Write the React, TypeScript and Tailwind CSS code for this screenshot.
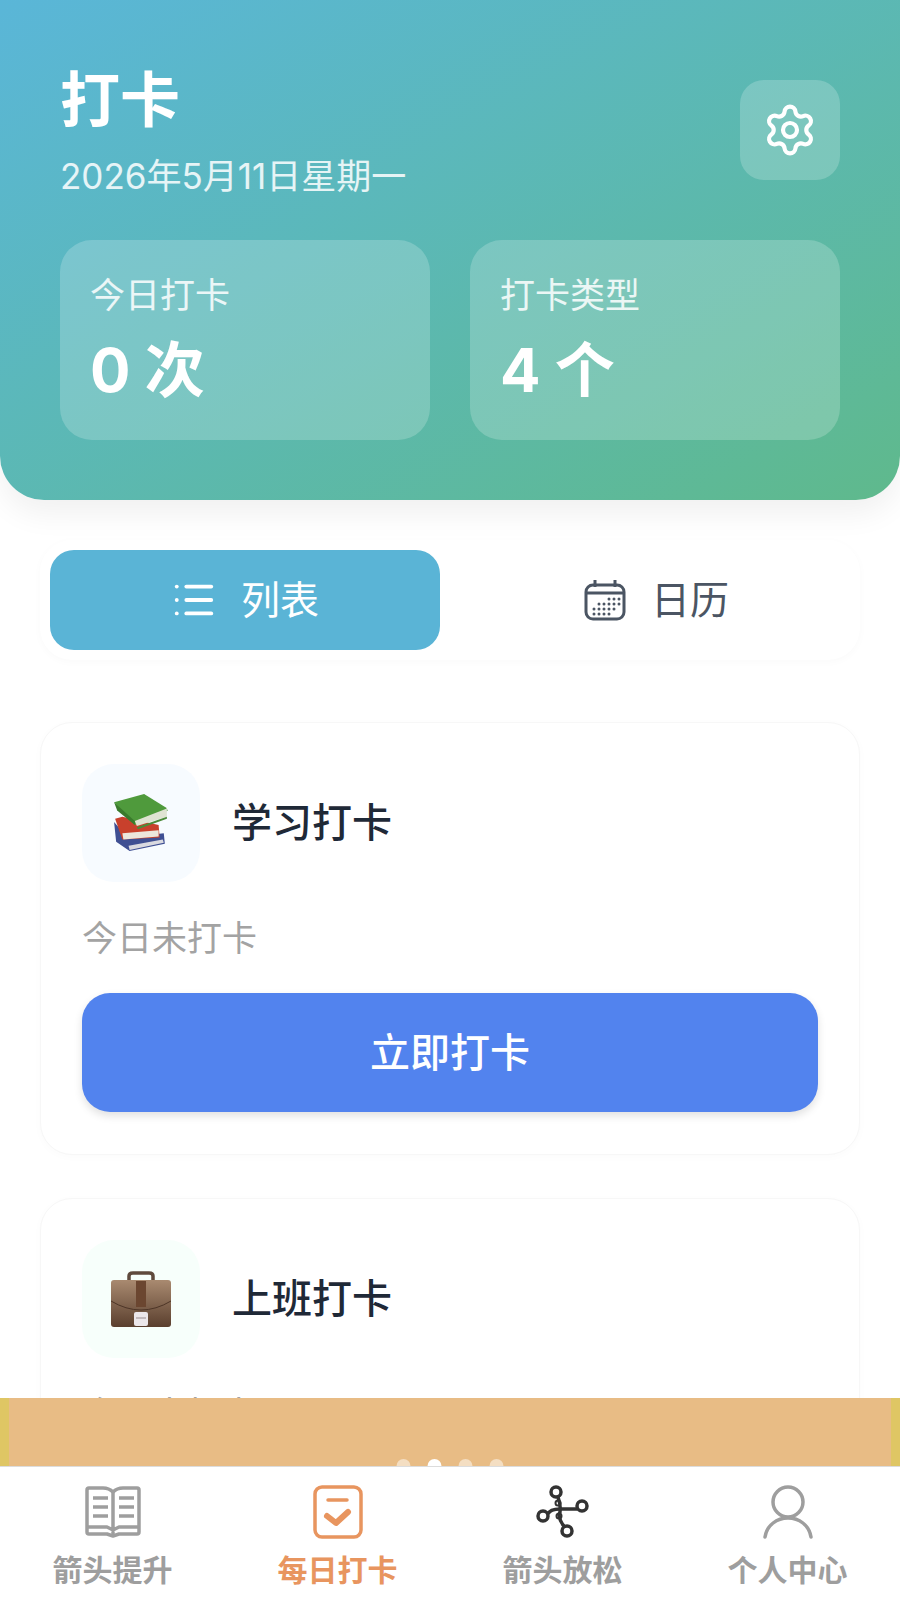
import { Settings, List } from "lucide-react";

const BooksIcon = () => (
  <svg width="56" height="58" viewBox="0 0 54 56">
    <path d="M1 27 L3 46 L16 55 L50 48 L49 38 L14 42 Z" fill="#3f4f93" />
    <path d="M15 50 L48 44 L49 47 L16 54 Z" fill="#d9d9e0" />
    <path d="M2 24 L9 22 L44 30 L45 42 L9 44 Z" fill="#c8402c" />
    <path d="M9 38 L44 35 L44 41 L10 44 Z" fill="#ece6dc" />
    <path d="M1 8 L30 0 L51 13 L53 16 L21 30 Z" fill="#4f9a3c" />
    <path d="M1 8 L21 26 L21 30 L4 16 Z" fill="#3a7a2c" />
    <path d="M21 26 L52 14 L52 22 L23 31 Z" fill="#dfe3d2" />
    <path d="M23 32 L52 22 L52 24 L24 34 Z" fill="#4a8a38" />
  </svg>
);

const BriefcaseIcon = () => (
  <svg width="60" height="56" viewBox="0 0 60 56">
    <defs>
      <linearGradient id="case" x1="0" y1="0" x2="0" y2="1">
        <stop offset="0" stopColor="#a98a70" />
        <stop offset="1" stopColor="#5a3f2e" />
      </linearGradient>
    </defs>
    <path d="M18 10 V5 Q18 2 22 2 H38 Q42 2 42 5 V10" fill="none" stroke="#5f4a3c" strokeWidth="3.5" />
    <rect x="0" y="9" width="60" height="47" rx="3" fill="url(#case)" />
    <rect x="25" y="10" width="10" height="26" fill="#6b4630" />
    <path d="M0 30 Q30 48 60 30" fill="none" stroke="#4d3527" strokeWidth="1" />
    <rect x="23" y="41" width="14" height="14" rx="2" fill="#ece7ea" />
    <rect x="25" y="46" width="10" height="2" fill="#c3babd" />
  </svg>
);

const CalendarIcon = () => (
  <svg width="42" height="42" viewBox="0 0 42 42" fill="none" stroke="#4b5563" strokeWidth="3">
    <rect x="2" y="6" width="38" height="34" rx="7" />
    <path d="M2 14 H40 M11 1 V8 M31 1 V8" />
    <g fill="#4b5563" stroke="none">
      <circle cx="25" cy="20" r="1.5" /><circle cx="30" cy="20" r="1.5" /><circle cx="35" cy="20" r="1.5" />
      <circle cx="15" cy="25" r="1.5" /><circle cx="20" cy="25" r="1.5" /><circle cx="25" cy="25" r="1.5" /><circle cx="30" cy="25" r="1.5" /><circle cx="35" cy="25" r="1.5" />
      <circle cx="10" cy="30" r="1.5" /><circle cx="15" cy="30" r="1.5" /><circle cx="20" cy="30" r="1.5" /><circle cx="25" cy="30" r="1.5" /><circle cx="30" cy="30" r="1.5" />
      <circle cx="10" cy="35" r="1.5" /><circle cx="15" cy="35" r="1.5" /><circle cx="20" cy="35" r="1.5" /><circle cx="25" cy="35" r="1.5" />
    </g>
  </svg>
);

const BookTabIcon = () => (
  <svg width="56" height="52" viewBox="0 0 56 52" fill="none" stroke="#9e9e9e" strokeWidth="3.5" strokeLinejoin="round">
    <path d="M28 6 Q24 2 18 2 H4 Q2 2 2 4 V46 Q2 48 4 48 H22 L28 50 L34 48 H52 Q54 48 54 46 V4 Q54 2 52 2 H38 Q32 2 28 6 Z" />
    <path d="M28 6 V48 M2 41 H22 L28 44 L34 41 H54" />
    <path d="M8 12 H23 M8 21 H23 M8 30 H23 M34 12 H49 M34 21 H49 M34 30 H49" strokeWidth="3.5" />
  </svg>
);

const CheckTabIcon = () => (
  <svg width="50" height="54" viewBox="0 0 50 54" fill="none" stroke="#e8955f" strokeLinecap="round" strokeLinejoin="round">
    <rect x="2" y="2" width="46" height="50" rx="7" strokeWidth="3.5" />
    <path d="M15 15 H34" strokeWidth="3.5" />
    <path d="M14 31 L23 38 L35 27" strokeWidth="6" />
  </svg>
);

const NodesTabIcon = () => (
  <svg width="54" height="54" viewBox="0 0 54 54" fill="none" stroke="#333333" strokeWidth="3.5">
    <circle cx="20" cy="7" r="5" />
    <circle cx="46" cy="21" r="5" />
    <circle cx="7" cy="31" r="5" />
    <circle cx="31" cy="46" r="5" />
    <path d="M22 12 Q26 24 23 30 Q24 37 28 41" />
    <path d="M12 29 Q14 24 24 24 H41" />
    <circle cx="22" cy="18" r="2.5" strokeWidth="2" />
    <circle cx="23" cy="31" r="2.5" strokeWidth="2" />
  </svg>
);

const UserTabIcon = () => (
  <svg width="50" height="54" viewBox="0 0 50 54" fill="none" stroke="#9e9e9e" strokeWidth="3.5" strokeLinecap="round">
    <circle cx="25" cy="17" r="15" />
    <path d="M2 52 C4 40 14 33 25 33 C36 33 46 40 48 52" />
  </svg>
);

const Stat = ({ label, value, unit }: { label: string; value: string; unit: string }) => (
  <div className="h-[200px] rounded-[32px] bg-white/20 px-[30px] pt-[32px]">
    <p className="text-[35px] leading-[46px] text-white/85">{label}</p>
    <p className="mt-[16px] text-[60px] leading-[72px] font-bold text-white">
      {value} {unit}
    </p>
  </div>
);

const CheckCard = ({
  title,
  icon,
  iconBg,
}: {
  title: string;
  icon: React.ReactNode;
  iconBg: string;
}) => (
  <div className="rounded-[32px] border border-[#f7f7f7] bg-white px-[41px] pt-[41px] pb-[42px] shadow-[0_2px_10px_rgba(0,0,0,0.02)]">
    <div className="flex items-center gap-[32px]">
      <div className={`flex h-[118px] w-[118px] items-center justify-center rounded-[32px] ${iconBg}`}>
        {icon}
      </div>
      <h2 className="text-[40px] leading-[56px] font-medium text-[#1f2937]">{title}</h2>
    </div>
    <p className="mt-[32px] text-[35px] leading-[48px] text-[#a3a3a3]">今日未打卡</p>
    <button
      type="button"
      className="mt-[31px] h-[119px] w-full rounded-[28px] bg-[#5283ee] text-[40px] font-medium text-white shadow-[0_4px_8px_rgba(0,0,0,0.12)]"
    >
      立即打卡
    </button>
  </div>
);

const NavItem = ({
  label,
  icon,
  active,
}: {
  label: string;
  icon: React.ReactNode;
  active?: boolean;
}) => (
  <div className="flex flex-col items-center">
    <div className="flex h-[56px] items-center justify-center">{icon}</div>
    <span className={`mt-[8px] text-[30px] leading-[44px] font-bold ${active ? "text-[#e8955f]" : "text-[#9e9e9e]"}`}>
      {label}
    </span>
  </div>
);

export default function App() {
  return (
    <div className="flex h-[1600px] flex-col overflow-hidden bg-white font-['Inter','Noto_Sans_CJK_SC',sans-serif]">
      <div className="min-h-0 flex-1 overflow-hidden">
        <header className="h-[500px] rounded-b-[44px] bg-gradient-to-br from-[#5ab6d8] to-[#5fb98c] px-[60px] pt-[62px] shadow-[0_14px_30px_rgba(0,0,0,0.06)]">
          <div className="flex items-start justify-between">
            <div>
              <h1 className="text-[60px] leading-[76px] font-bold text-white">打卡</h1>
              <p className="mt-[14px] text-[35px] leading-[48px] text-white/85">2026年5月11日星期一</p>
            </div>
            <button
              type="button"
              className="mt-[18px] flex h-[100px] w-[100px] items-center justify-center rounded-[24px] bg-white/20"
            >
              <Settings size={56} strokeWidth={1.8} className="text-white" />
            </button>
          </div>
          <div className="mt-[40px] grid grid-cols-2 gap-[40px]">
            <Stat label="今日打卡" value="0" unit="次" />
            <Stat label="打卡类型" value="4" unit="个" />
          </div>
        </header>

        <div className="mx-[40px] mt-[40px] grid grid-cols-2 gap-[20px] rounded-[32px] bg-white p-[10px] shadow-[0_2px_8px_rgba(0,0,0,0.025)]">
          <div className="flex h-[100px] items-center justify-center gap-[24px] rounded-[24px] bg-[#5ab4d6] text-[39px] text-white">
            <List size={46} strokeWidth={2} />
            <span>列表</span>
          </div>
          <div className="flex h-[100px] items-center justify-center gap-[25px] pl-[3px] text-[39px] text-[#4b5563]">
            <CalendarIcon />
            <span>日历</span>
          </div>
        </div>

        <div className="mx-[40px] mt-[62px] flex flex-col gap-[43px]">
          <CheckCard title="学习打卡" icon={<BooksIcon />} iconBg="bg-[#f7fbff]" />
          <CheckCard title="上班打卡" icon={<BriefcaseIcon />} iconBg="bg-[#f7fffb]" />
        </div>
      </div>

      <div className="relative h-[68px] shrink-0 overflow-hidden border-x-[9px] border-[#dfc664] bg-[#e8bc85]">
        <div className="absolute bottom-[-7px] left-1/2 flex -translate-x-1/2 gap-[17px]">
          <span className="h-[14px] w-[14px] rounded-full bg-white/50" />
          <span className="h-[14px] w-[14px] rounded-full bg-white" />
          <span className="h-[14px] w-[14px] rounded-full bg-white/50" />
          <span className="h-[14px] w-[14px] rounded-full bg-white/50" />
        </div>
      </div>

      <nav className="grid h-[134px] shrink-0 grid-cols-4 border-t border-[#dcdcdc] bg-white pt-[17px]">
        <NavItem label="箭头提升" icon={<BookTabIcon />} />
        <NavItem label="每日打卡" icon={<CheckTabIcon />} active />
        <NavItem label="箭头放松" icon={<NodesTabIcon />} />
        <NavItem label="个人中心" icon={<UserTabIcon />} />
      </nav>
    </div>
  );
}
